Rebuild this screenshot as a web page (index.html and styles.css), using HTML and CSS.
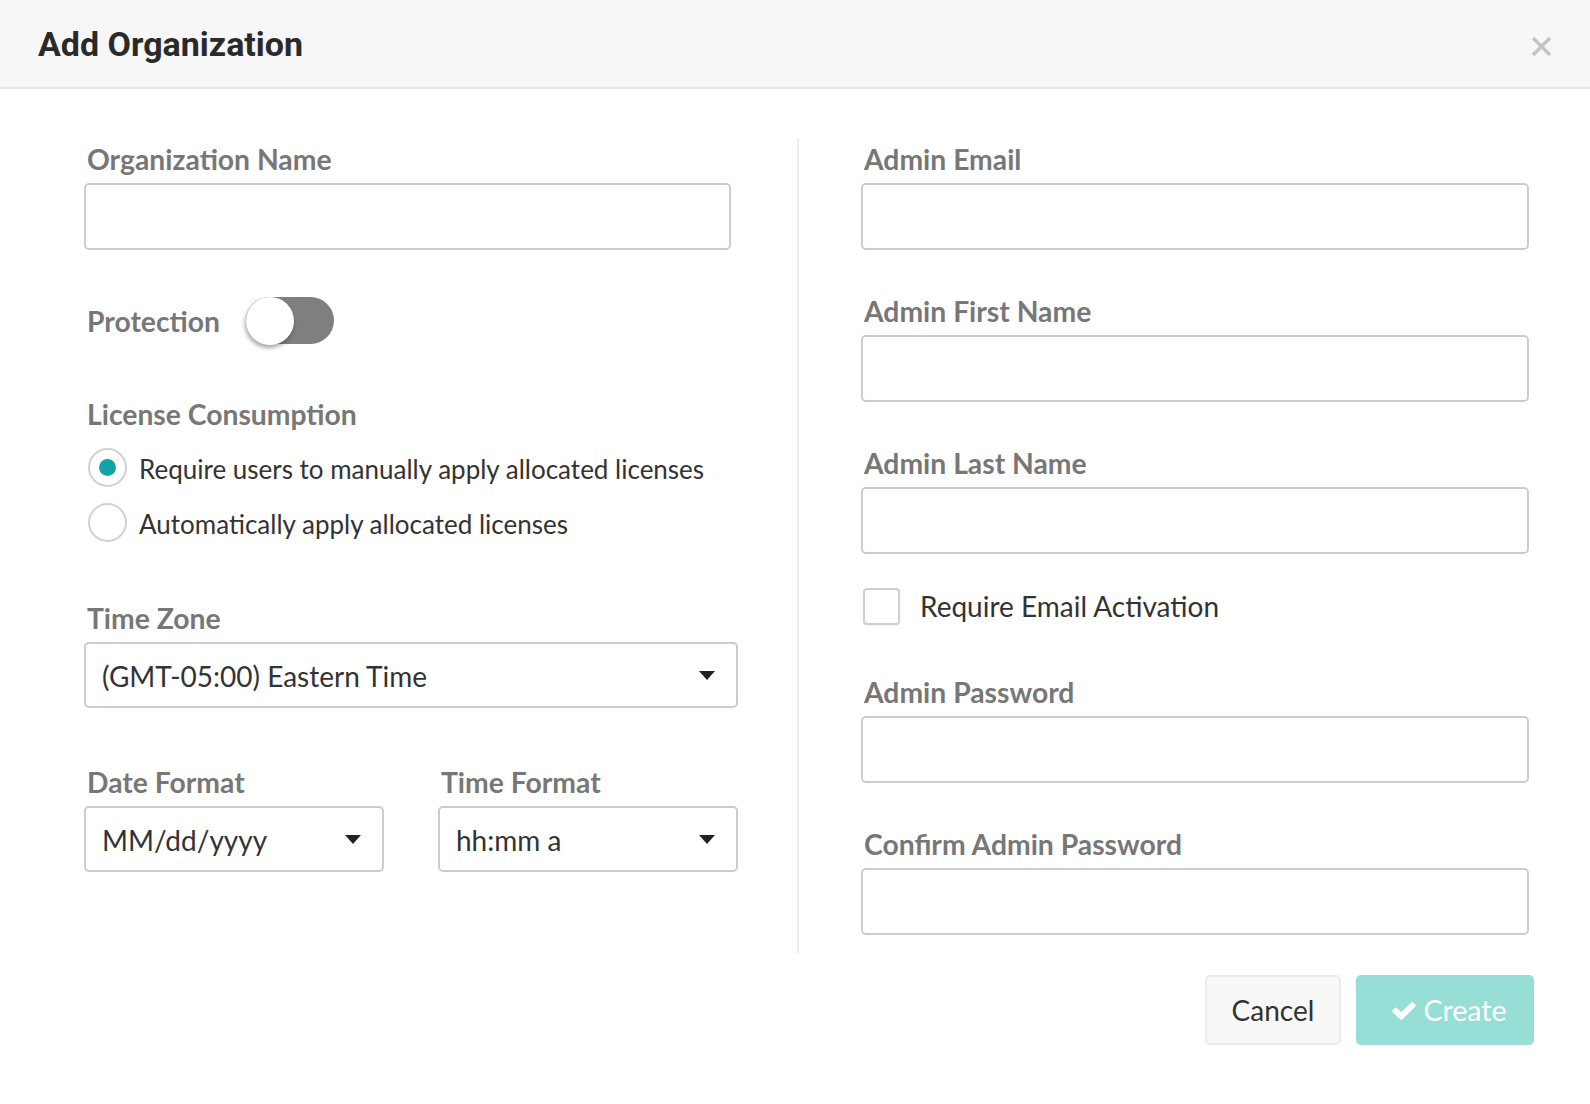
FILE: index.html
```html
<!DOCTYPE html>
<html lang="en">
<head>
<meta charset="utf-8">
<title>Add Organization</title>
<link rel="stylesheet" href="styles.css">
</head>
<body>
<div class="modal">
  <header class="modal-header">
    <h1 class="modal-title">Add Organization</h1>
    <button class="close-btn" type="button" aria-label="Close">
      <svg width="21" height="21" viewBox="0 0 21 21"><path d="M2 2 L19 19 M19 2 L2 19" stroke="#c4c4c4" stroke-width="3.4" fill="none"/></svg>
    </button>
  </header>

  <div class="modal-body">
    <div class="col col-left">
      <div class="field">
        <label class="field-label">Organization Name</label>
        <input class="text-input text-input--narrow" type="text">
      </div>

      <div class="toggle-row">
        <span class="field-label field-label--inline">Protection</span>
        <span class="toggle"><span class="toggle-knob"></span></span>
      </div>

      <div class="license">
        <div class="field-label">License Consumption</div>
        <div class="radio-row">
          <span class="radio radio--checked"><span class="radio-dot"></span></span>
          <span class="radio-text">Require users to manually apply allocated licenses</span>
        </div>
        <div class="radio-row">
          <span class="radio"></span>
          <span class="radio-text">Automatically apply allocated licenses</span>
        </div>
      </div>

      <div class="field field--tz">
        <label class="field-label">Time Zone</label>
        <div class="select">
          <span class="select-text">(GMT-05:00) Eastern Time</span>
          <svg class="caret" width="16" height="9" viewBox="0 0 16 9"><path d="M0 0 H16 L8 9 Z" fill="#222"/></svg>
        </div>
      </div>

      <div class="format-row">
        <div class="field">
          <label class="field-label">Date Format</label>
          <div class="select">
            <span class="select-text">MM/dd/yyyy</span>
            <svg class="caret" width="16" height="9" viewBox="0 0 16 9"><path d="M0 0 H16 L8 9 Z" fill="#222"/></svg>
          </div>
        </div>
        <div class="field">
          <label class="field-label">Time Format</label>
          <div class="select">
            <span class="select-text">hh:mm a</span>
            <svg class="caret" width="16" height="9" viewBox="0 0 16 9"><path d="M0 0 H16 L8 9 Z" fill="#222"/></svg>
          </div>
        </div>
      </div>
    </div>

    <div class="col col-right">
      <div class="field">
        <label class="field-label">Admin Email</label>
        <input class="text-input" type="text">
      </div>
      <div class="field field--next">
        <label class="field-label">Admin First Name</label>
        <input class="text-input" type="text">
      </div>
      <div class="field field--next">
        <label class="field-label">Admin Last Name</label>
        <input class="text-input" type="text">
      </div>
      <div class="check-row">
        <span class="checkbox"></span>
        <span class="check-text">Require Email Activation</span>
      </div>
      <div class="field field--after-check">
        <label class="field-label">Admin Password</label>
        <input class="text-input" type="password">
      </div>
      <div class="field field--next">
        <label class="field-label">Confirm Admin Password</label>
        <input class="text-input" type="password">
      </div>
    </div>
  </div>

  <footer class="modal-footer">
    <button class="btn btn-cancel" type="button">Cancel</button>
    <button class="btn btn-create" type="button">
      <svg class="check-icon" width="24" height="19" viewBox="121 270 1550 1252"><path d="M1671 566q0 40-28 68l-724 724-136 136q-28 28-68 28t-68-28l-136-136-362-362q-28-28-28-68t28-68l136-136q28-28 68-28t68 28l294 295 656-657q28-28 68-28t68 28l136 136q28 28 28 68z" fill="#fff"/></svg>
      <span>Create</span>
    </button>
  </footer>
</div>
</body>
</html>
```

FILE: styles.css
```css
* { box-sizing: border-box; }

html, body {
  margin: 0;
  padding: 0;
  background: #ffffff;
}

body {
  font-family: "Lato", "Liberation Sans", sans-serif;
  color: #333333;
}

.modal {
  width: 1590px;
  min-height: 1104px;
  background: #ffffff;
}

/* Header */
.modal-header {
  height: 89px;
  background: #f7f7f7;
  border-bottom: 2px solid #e4e4e4;
  display: flex;
  align-items: center;
  justify-content: space-between;
  padding: 0 38px 0 38px;
}

.modal-title {
  margin: 0;
  font-family: "Roboto", "Liberation Sans", sans-serif;
  font-weight: 700;
  font-size: 34px;
  line-height: 1;
  color: #2a2a2a;
}

.close-btn {
  border: 0;
  background: transparent;
  padding: 0;
  margin-top: 6px;
  width: 21px;
  height: 21px;
  display: flex;
}

/* Body */
.modal-body {
  display: grid;
  grid-template-columns: 797px 1fr;
  padding-top: 49px;
}

.col {
  padding-top: 5px;
}

.col-left {
  padding-left: 84px;
  padding-right: 59px;
}

.col-right {
  border-left: 2px solid #ececec;
  padding-left: 62px;
  padding-right: 61px;
  padding-bottom: 18px;
}

.field-label {
  display: block;
  font-weight: 700;
  font-size: 28.3px;
  line-height: 32px;
  color: #777777;
  margin: 0 0 8px 3px;
}

.field-label--inline {
  margin: 0 26px 0 3px;
}

.text-input {
  display: block;
  width: 100%;
  height: 67px;
  border: 2px solid #cccccc;
  border-radius: 5px;
  background: #ffffff;
  font: inherit;
  margin: 0;
}

.text-input--narrow {
  width: calc(100% - 7px);
}

.field--next {
  margin-top: 45px;
}

.field--after-check {
  margin-top: 50px;
}

/* Toggle */
.toggle-row {
  display: flex;
  align-items: center;
  height: 47px;
  margin-top: 47px;
}

.toggle {
  position: relative;
  display: block;
  width: 88px;
  height: 47px;
  border-radius: 24px;
  background: #7f7f7f;
}

.toggle-knob {
  position: absolute;
  left: 0;
  top: 0;
  width: 48px;
  height: 48px;
  border-radius: 50%;
  background: #ffffff;
  box-shadow: -1px 3px 4px rgba(0, 0, 0, 0.35);
}

/* License */
.license {
  margin-top: 54px;
}

.license .field-label {
  margin-bottom: 17px;
}

.radio-row {
  display: flex;
  align-items: center;
  height: 41px;
  margin-left: 4px;
}

.radio-row + .radio-row {
  margin-top: 14px;
}

.radio {
  width: 39px;
  height: 39px;
  border-radius: 50%;
  border: 2px solid #d2d2d2;
  background: #ffffff;
  display: flex;
  align-items: center;
  justify-content: center;
  flex: none;
}

.radio-dot {
  width: 17px;
  height: 17px;
  border-radius: 50%;
  background: #12a3a9;
}

.radio-text {
  margin-left: 12px;
  padding-top: 4px;
  font-size: 26px;
  line-height: 1.2;
  color: #333333;
}

/* Selects */
.field--tz {
  margin-top: 59px;
}

.select {
  display: flex;
  align-items: center;
  justify-content: space-between;
  height: 66px;
  border: 2px solid #cccccc;
  border-radius: 5px;
  background: #ffffff;
  padding: 0 21px 0 16px;
}

.select-text {
  padding-top: 4px;
  font-size: 28px;
  line-height: 1.2;
  color: #333333;
}

.caret {
  display: block;
  flex: none;
}

.format-row {
  display: grid;
  grid-template-columns: 300px 300px;
  column-gap: 54px;
  margin-top: 58px;
}

/* Checkbox */
.check-row {
  display: flex;
  align-items: center;
  height: 40px;
  margin-top: 32px;
}

.checkbox {
  width: 37px;
  height: 37px;
  border: 2px solid #d0d0d0;
  border-radius: 4px;
  background: #ffffff;
  box-shadow: 0 1px 2px rgba(0, 0, 0, 0.08);
  margin-left: 2px;
  flex: none;
}

.check-text {
  margin-left: 20px;
  padding-top: 2px;
  font-size: 28px;
  line-height: 1.2;
  color: #333333;
}

/* Footer */
.modal-footer {
  display: flex;
  justify-content: flex-end;
  gap: 15px;
  margin-top: 22px;
  padding-right: 56px;
}

.btn {
  height: 70px;
  border-radius: 5px;
  font-family: "Lato", "Liberation Sans", sans-serif;
  font-size: 28px;
  display: flex;
  align-items: center;
  justify-content: center;
  padding: 0;
}

.btn-cancel {
  width: 136px;
  background: #f8f8f8;
  border: 2px solid #ebebeb;
  color: #333333;
}

.btn-create {
  width: 178px;
  background: #97dfd6;
  border: 0;
  color: #ffffff;
  gap: 8px;
  padding-left: 8px;
  font-size: 28.5px;
}

.check-icon {
  display: block;
  width: 24px;
  height: 19px;
}
```
